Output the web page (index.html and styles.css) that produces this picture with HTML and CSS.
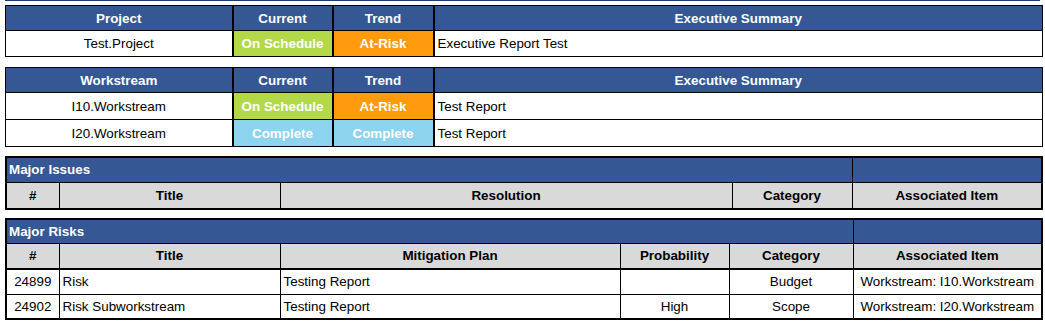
FILE: index.html
```html
<!DOCTYPE html>
<html>
<head>
<meta charset="utf-8">
<link rel="stylesheet" href="styles.css">
</head>
<body>
<div class="page">
  <div class="topline"></div>

  <table class="grid status">
    <colgroup><col class="c-name"><col class="c-stat"><col class="c-stat2"><col></colgroup>
    <tr class="head"><th>Project</th><th class="st">Current</th><th class="st">Trend</th><th>Executive Summary</th></tr>
    <tr><td class="ctr">Test.Project</td><td class="st green">On Schedule</td><td class="st orange">At-Risk</td><td>Executive Report Test</td></tr>
  </table>

  <table class="grid status ws">
    <colgroup><col class="c-name"><col class="c-stat"><col class="c-stat2"><col></colgroup>
    <tr class="head"><th>Workstream</th><th class="st">Current</th><th class="st">Trend</th><th>Executive Summary</th></tr>
    <tr><td class="ctr">I10.Workstream</td><td class="st green">On Schedule</td><td class="st orange">At-Risk</td><td>Test Report</td></tr>
    <tr><td class="ctr">I20.Workstream</td><td class="st blue">Complete</td><td class="st blue">Complete</td><td>Test Report</td></tr>
  </table>

  <table class="grid thick issues">
    <colgroup><col class="c-id"><col class="c-title"><col class="c-res"><col class="c-cat"><col></colgroup>
    <tr class="title"><th colspan="4">Major Issues</th><th></th></tr>
    <tr class="sub"><th>#</th><th>Title</th><th>Resolution</th><th>Category</th><th>Associated Item</th></tr>
  </table>

  <table class="grid thick risks">
    <colgroup><col class="c-id"><col class="c-title"><col class="c-mit"><col class="c-prob"><col class="c-cat2"><col></colgroup>
    <tr class="title"><th colspan="5">Major Risks</th><th></th></tr>
    <tr class="sub"><th>#</th><th>Title</th><th>Mitigation Plan</th><th>Probability</th><th>Category</th><th>Associated Item</th></tr>
    <tr><td class="ctr">24899</td><td>Risk</td><td>Testing Report</td><td class="ctr"></td><td class="ctr">Budget</td><td class="ctr">Workstream: I10.Workstream</td></tr>
    <tr><td class="ctr">24902</td><td>Risk Subworkstream</td><td>Testing Report</td><td class="ctr">High</td><td class="ctr">Scope</td><td class="ctr">Workstream: I20.Workstream</td></tr>
  </table>
</div>
</body>
</html>
```

FILE: styles.css
```css
html, body {
  margin: 0;
  padding: 0;
  background: #ffffff;
}
body {
  font-family: "Liberation Sans", Arial, sans-serif;
  font-size: 13.4px;
  color: #000000;
}
.page {
  padding: 0 0 0 5px;
  width: 1038px;
}
.topline {
  height: 1px;
  width: 1035px;
  background: #1d3c6b;
  margin-bottom: 4px;
}
.grid {
  width: 1038px;
  border-collapse: collapse;
  table-layout: fixed;
  margin-bottom: 10px;
}
.grid th, .grid td {
  border: 1px solid #000000;
  padding: 0 3px;
  white-space: nowrap;
  overflow: hidden;
  text-align: left;
  font-weight: normal;
}
.grid tr { height: 26px; }
.status {
  border: 1px solid #000;
}
.status .head { height: 25px; }
.ws tr { height: 27px; }
.ws .head { height: 25px; }
.ws { margin-bottom: 9px; }
.status .head th {
  background: #355894;
  color: #ffffff;
  font-weight: bold;
  text-align: center;
}
.status .st {
  border-left: 2px solid #000;
  border-right: 2px solid #000;
  text-align: center;
}
.status td.st {
  color: #ffffff;
  font-weight: bold;
}
.green { background: #b3d949; }
.orange { background: #ff9a0d; }
.blue { background: #8dd4ef; }
.ctr { text-align: center !important; }

.c-name { width: 227px; }
.c-stat { width: 100px; }
.c-stat2 { width: 101px; }

.thick {
  border: 2px solid #000;
}
.thick .title { height: 25px; }
.thick .title th {
  background: #355894;
  color: #ffffff;
  font-weight: bold;
  text-align: left;
  padding-left: 2px;
}
.thick .sub { height: 26px; }
.issues .sub { height: 27px; }
.issues { margin-bottom: 8px; }
.risks .title { height: 24px; }
.risks tr { height: 25px; }
.risks .sub { height: 26px; }
.thick .sub th {
  background: #d9d9d9;
  font-weight: bold;
  text-align: center;
}
.risks .sub th {
  border-bottom: 2px solid #000;
}
.c-id { width: 53px; }
.c-title { width: 221px; }
.c-res { width: 452px; }
.c-cat { width: 120px; }
.c-mit { width: 340px; }
.c-prob { width: 109px; }
.c-cat2 { width: 124px; }
```
